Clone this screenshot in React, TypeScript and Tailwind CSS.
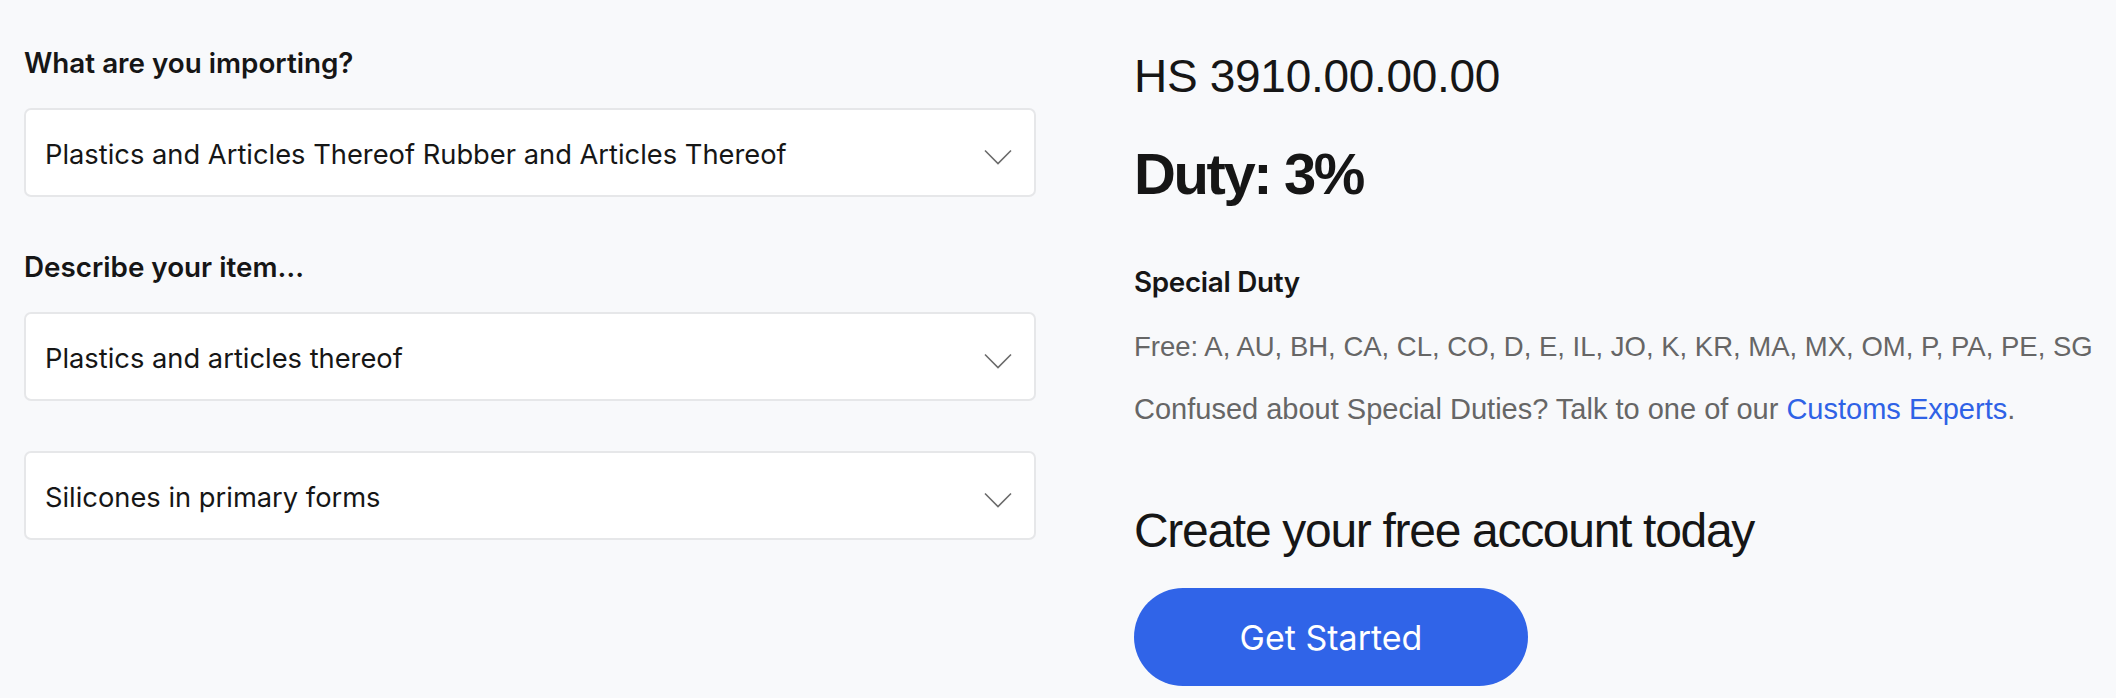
import React from "react";

const sans = "font-['Inter','Noto_Sans',sans-serif]";
const grotesk = "font-['Liberation_Sans','Arial',sans-serif]";

function Chevron() {
  return (
    <svg width="28" height="16" viewBox="0 0 28 16" fill="none" className="mt-2 shrink-0">
      <polyline points="1,1.5 14,14.5 27,1.5" stroke="#6b6b6b" strokeWidth="1.6" />
    </svg>
  );
}

function SelectBox({ value }: { value: string }) {
  return (
    <div className="flex h-[89px] items-center justify-between rounded-[7px] border-2 border-[#e6e7e9] bg-white pl-[19px] pr-[22px]">
      <span className="mt-[3px] text-[27.3px] leading-[33px] text-[#161616]">{value}</span>
      <Chevron />
    </div>
  );
}

export default function App() {
  return (
    <div className={`min-h-[698px] w-full bg-[#f8f9fb] ${sans}`}>
      <div className="grid grid-cols-[1012px_1fr] gap-x-[98px] px-6">
        <div className="flex flex-col pt-[47px]">
          <label className="text-[27.8px] font-semibold leading-[33px] text-[#161616]">What are you importing?</label>
          <div className="mt-[28px]">
            <SelectBox value="Plastics and Articles Thereof Rubber and Articles Thereof" />
          </div>

          <label className="mt-[54px] text-[27.8px] font-semibold leading-[33px] text-[#161616]">Describe your item…</label>
          <div className="mt-[28px]">
            <SelectBox value="Plastics and articles thereof" />
          </div>

          <div className="mt-[50px]">
            <SelectBox value="Silicones in primary forms" />
          </div>
        </div>

        <div className="flex flex-col items-start pt-[50px]">
          <h2 className={`${grotesk} text-[46px] leading-[52px] tracking-[-0.3px] text-[#161616]`}>HS 3910.00.00.00</h2>
          <h1 className={`${grotesk} mt-[40px] text-[58px] font-bold leading-[64px] tracking-[-2.4px] text-[#161616]`}>Duty: 3%</h1>

          <h3 className="mt-[60px] text-[27.8px] font-semibold leading-[33px] tracking-[-0.3px] text-[#161616]">Special Duty</h3>
          <p className={`${grotesk} mt-[30px] whitespace-nowrap text-[27.5px] leading-[36px] text-[#666666]`}>
            Free: A, AU, BH, CA, CL, CO, D, E, IL, JO, K, KR, MA, MX, OM, P, PA, PE, SG
          </p>
          <p className={`${grotesk} mt-[26px] whitespace-nowrap text-[29px] leading-[36px] text-[#666666]`}>
            Confused about Special Duties? Talk to one of our{" "}
            <a href="#" className="text-[#2f62e6]">Customs Experts</a>.
          </p>

          <h2 className={`${grotesk} mt-[76px] text-[48px] leading-[56px] tracking-[-1.3px] text-[#161616]`}>
            Create your free account today
          </h2>
          <button className="mt-[29px] flex h-[98px] w-[394px] items-center justify-center rounded-full bg-[#3064e8] text-[34px] text-white">
            Get Started
          </button>
        </div>
      </div>
    </div>
  );
}
